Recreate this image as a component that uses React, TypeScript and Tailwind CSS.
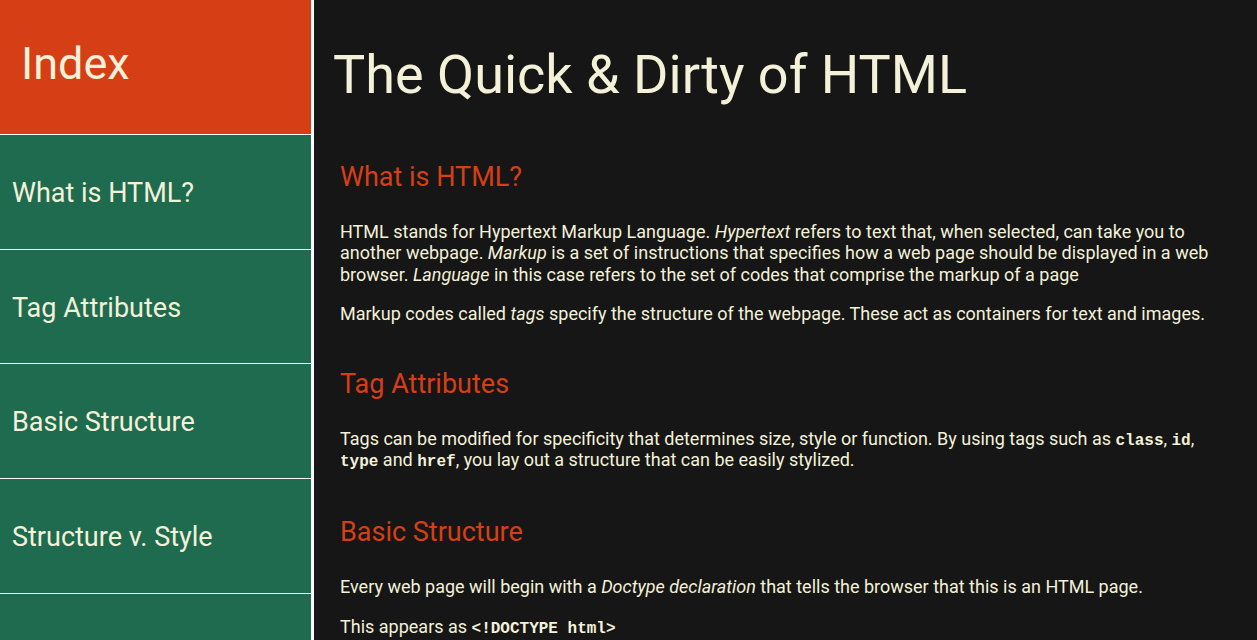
import React from "react";

const navItems = ["What is HTML?", "Tag Attributes", "Basic Structure", "Structure v. Style", "Style Sheets"];

function Code({ children }: { children: React.ReactNode }) {
  return (
    <code
      className="font-bold text-[16px] leading-none"
      style={{ fontFamily: '"Liberation Mono", "Courier New", monospace' }}
    >
      {children}
    </code>
  );
}

export default function App() {
  return (
    <div
      className="flex h-[640px] w-full overflow-hidden bg-[#161616] text-[#F4F1D9]"
      style={{ fontFamily: 'Roboto, "Liberation Sans", sans-serif' }}
    >
      <nav className="flex w-[314px] shrink-0 flex-col border-r-[3px] border-white">
        <header className="flex h-[135px] shrink-0 items-start border-b border-white bg-[#D63F15] pl-[21px] pt-[36px]">
          <h1 className="text-[45px] leading-[56px]">Index</h1>
        </header>
        {navItems.map((item) => (
          <a
            key={item}
            href="#"
            className="flex h-[114.7px] shrink-0 items-center border-b border-white bg-[#1F6B50] pl-[12px] pt-[2px] text-[27px] leading-[32px]"
          >
            {item}
          </a>
        ))}
      </nav>
      <main className="flex-1 overflow-hidden pl-[19px] pr-[30px] pt-[43px] text-[18px] leading-[21.3px]">
        <h1 className="text-[54px] leading-[63px]">The Quick &amp; Dirty of HTML</h1>
        <section className="pl-[7px] pt-[55px]">
          <h2 className="mb-[28px] text-[27px] leading-[32px] text-[#D63F15]">What is HTML?</h2>
          <p className="mb-[18px]">
            HTML stands for Hypertext Markup Language. <em>Hypertext</em> refers to text that, when selected, can take you
            to another webpage. <em>Markup</em> is a set of instructions that specifies how a web page should be
            displayed in a web browser. <em>Language</em> in this case refers to the set of codes that comprise the markup
            of a page
          </p>
          <p className="mb-[18px]">
            Markup codes called <em>tags</em> specify the structure of the webpage. These act as containers for text and
            images.
          </p>
        </section>
        <section className="pl-[7px] pt-[26px]">
          <h2 className="mb-[28px] text-[27px] leading-[32px] text-[#D63F15]">Tag Attributes</h2>
          <p className="mb-[18px]">
            Tags can be modified for specificity that determines size, style or function. By using tags such as{" "}
            <Code>class</Code>, <Code>id</Code>, <Code>type</Code> and <Code>href</Code>, you lay out a structure that can
            be easily stylized.
          </p>
        </section>
        <section className="pl-[7px] pt-[27px]">
          <h2 className="mb-[28px] text-[27px] leading-[32px] text-[#D63F15]">Basic Structure</h2>
          <p className="mb-[19px]">
            Every web page will begin with a <em>Doctype declaration</em> that tells the browser that this is an HTML
            page.
          </p>
          <p className="mb-[18px]">
            This appears as <Code>&lt;!DOCTYPE html&gt;</Code>
          </p>
        </section>
      </main>
    </div>
  );
}
